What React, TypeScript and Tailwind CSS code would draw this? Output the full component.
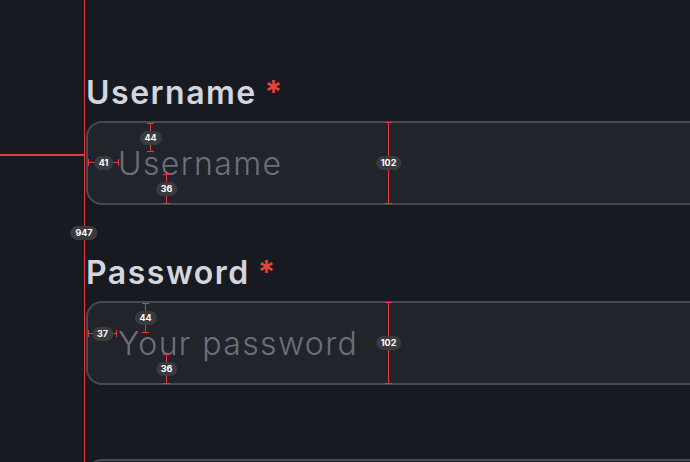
import React from 'react';

// small grey pill that carries a measurement number
function Pill({ children }: { children: React.ReactNode }) {
  return (
    <span className="rounded-full bg-[#3b3b3d] px-[5px] text-[9px] font-bold leading-[14px] text-white">
      {children}
    </span>
  );
}

// vertical measure: ticks at both ends, pill in the middle
function VMeasure({ className, label }: { className: string; label: string }) {
  return (
    <div className={`absolute flex w-[7px] -translate-x-[3px] flex-col items-center ${className}`}>
      <div className="h-px w-[7px] bg-[#e5383b]" />
      <div className="w-px flex-1 bg-[#e5383b]" />
      <div className="h-px w-[7px] bg-[#e5383b]" />
      <div className="absolute top-1/2 left-1/2 flex -translate-x-1/2 -translate-y-1/2">
        <Pill>{label}</Pill>
      </div>
    </div>
  );
}

// horizontal measure
function HMeasure({ className, label }: { className: string; label: string }) {
  return (
    <div className={`absolute flex h-[7px] -translate-y-[3px] items-center ${className}`}>
      <div className="h-[7px] w-px bg-[#e5383b]" />
      <div className="h-px flex-1 bg-[#e5383b]" />
      <div className="h-[7px] w-px bg-[#e5383b]" />
      <div className="absolute top-1/2 left-1/2 flex -translate-x-1/2 -translate-y-1/2">
        <Pill>{label}</Pill>
      </div>
    </div>
  );
}

function Field({ label, placeholder, type = 'text' }: { label: string; placeholder: string; type?: string }) {
  return (
    <div className="flex flex-col">
      <label className="mb-2 flex items-baseline text-[32px] leading-[40px] font-semibold text-[#d3d6dd]">
        <span className="tracking-[1.5px]">{label}</span>
        <span className="ml-[8px] text-[#e4463d]">*</span>
      </label>
      <input
        type={type}
        placeholder={placeholder}
        readOnly
        className="h-[84px] w-[720px] rounded-[16px] border-2 border-[#474a52] bg-[#22242b] pl-[30px] text-[32px] font-light tracking-[1.4px] text-[#d3d6dd] outline-none placeholder:text-[#6c7079]"
      />
    </div>
  );
}

export default function App() {
  return (
    <div className="relative h-[462px] w-[690px] overflow-hidden bg-[#181a21] font-['Inter','Noto_Sans',sans-serif]">
      <div className="flex flex-col gap-12 pt-[73px] pl-[86px]">
        <Field label="Username" placeholder="Username" />
        <Field label="Password" placeholder="Your password" type="password" />
        <div className="mt-[26px] h-[84px] w-[720px] rounded-[16px] border-2 border-[#474a52] bg-[#22242b]" />
      </div>

      {/* redline overlay */}
      <div className="absolute top-0 left-[84px] h-full w-px bg-[#e5383b]" />
      <div className="absolute top-[154px] left-0 h-[2px] w-[84px] bg-[#e5383b]" />
      <div className="absolute top-[226px] left-[84px] flex -translate-x-1/2">
        <Pill>947</Pill>
      </div>

      <VMeasure className="top-[123px] left-[150px] h-[29px]" label="44" />
      <HMeasure className="top-[162px] left-[88px] w-[31px]" label="41" />
      <VMeasure className="top-[174px] left-[166px] h-[30px]" label="36" />
      <VMeasure className="top-[122px] left-[388px] h-[82px]" label="102" />

      <VMeasure className="top-[303px] left-[145px] h-[30px]" label="44" />
      <HMeasure className="top-[333px] left-[88px] w-[29px]" label="37" />
      <VMeasure className="top-[354px] left-[166px] h-[30px]" label="36" />
      <VMeasure className="top-[302px] left-[388px] h-[82px]" label="102" />
    </div>
  );
}
